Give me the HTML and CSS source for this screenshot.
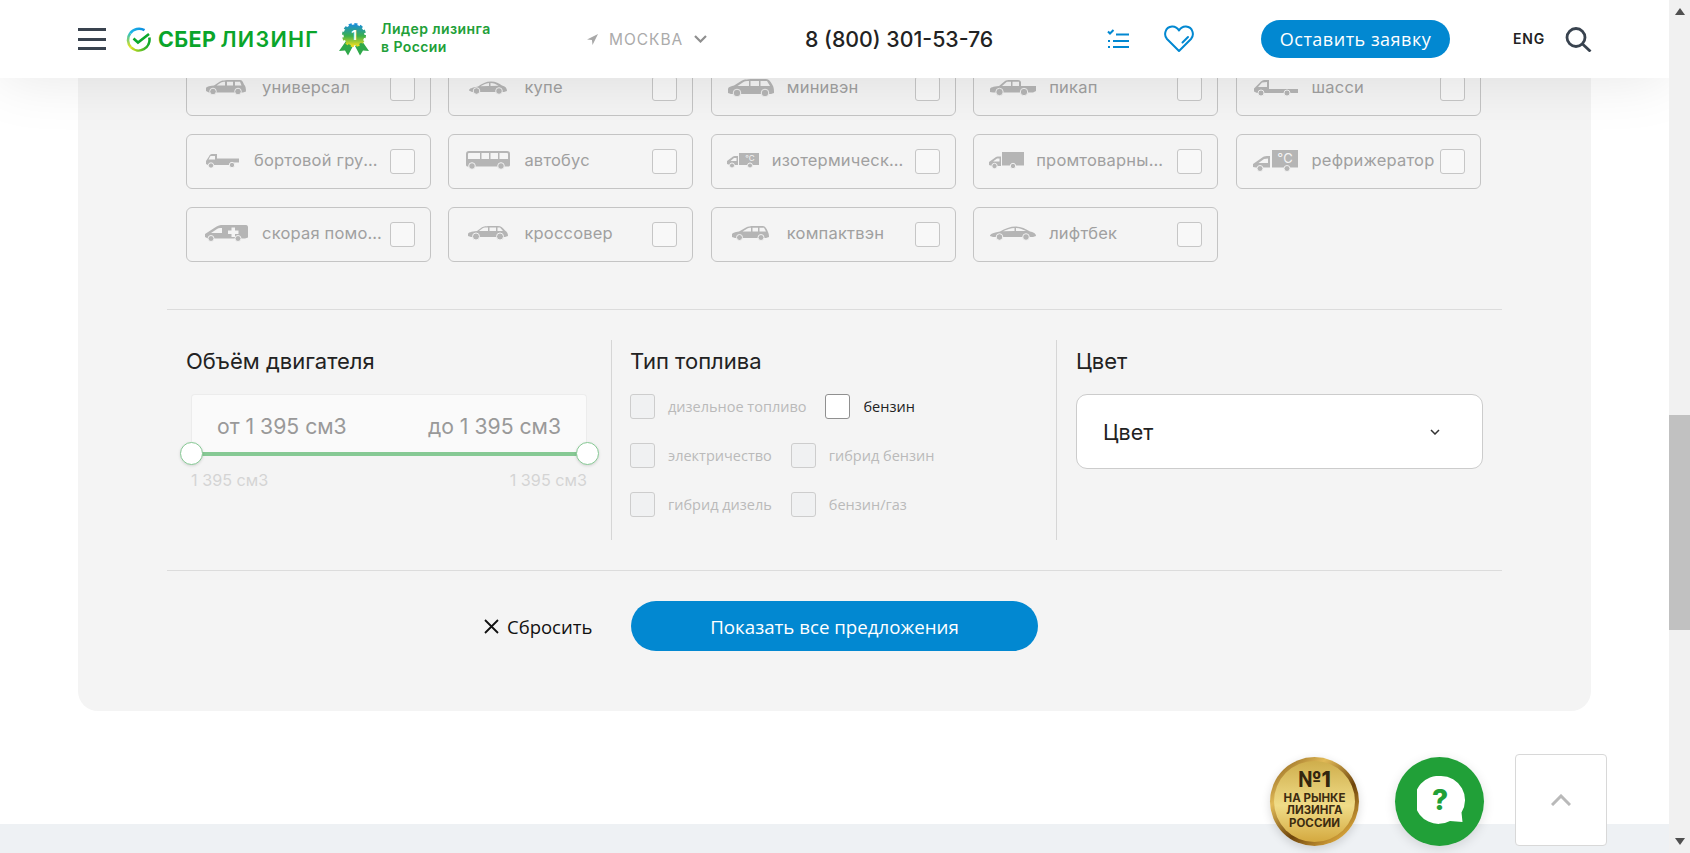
FILE: index.html
```html
<!DOCTYPE html>
<html lang="ru">
<head>
<meta charset="utf-8">
<title>Сбербанк Лизинг</title>
<link rel="stylesheet" href="styles.css">
</head>
<body>
<div class="app">
  <div class="page">
    <header class="header">
      <div class="brand">
        <div class="burger"><span></span><span></span><span></span></div>
        <svg class="logo-mark" width="25" height="25" viewBox="0 0 25 25">
          <defs>
            <linearGradient id="ringA" x1="0" y1="0" x2="1" y2="0"><stop offset="0" stop-color="#1fb8e8"/><stop offset="1" stop-color="#0a8be0"/></linearGradient>
            <linearGradient id="ringB" x1="0" y1="0" x2="0" y2="1"><stop offset="0" stop-color="#2ec0c0"/><stop offset="1" stop-color="#e6e31a"/></linearGradient>
            <linearGradient id="ringC" x1="0" y1="0" x2="1" y2="0"><stop offset="0" stop-color="#d8e020"/><stop offset="1" stop-color="#0aa82a"/></linearGradient>
          </defs>
          <path class="ring" stroke="url(#ringA)" d="M4.2 6.3A10.9 10.9 0 0 1 18.5 3.2"/>
          <path class="ring" stroke="url(#ringB)" d="M4.2 6.3A10.9 10.9 0 0 0 5 20.4"/>
          <path class="ring" stroke="url(#ringC)" d="M5 20.4A10.9 10.9 0 0 0 23.3 10.5"/>
          <path class="logo-check" d="M7.5 11.5L12 15.5L23 7"/>
        </svg>
        <div class="logo-text"><span class="logo-sber">СБЕР</span><span class="logo-lease">ЛИЗИНГ</span></div>
        <svg class="rosette" width="30" height="33" viewBox="0 0 30 33">
          <defs>
            <linearGradient id="rose" x1="0" y1="0" x2="0" y2="1"><stop offset="0" stop-color="#1a8fd8"/><stop offset=".55" stop-color="#3cb04a"/><stop offset="1" stop-color="#e8dc20"/></linearGradient>
          </defs>
          <path class="rib" d="M7 18L0 28L6 27.5L9 32.5L14 23Z"/>
          <path class="rib" d="M23 18L30 28L24 27.5L21 32.5L16 23Z"/>
          <circle cx="15" cy="12" r="10.5" fill="url(#rose)" stroke="url(#rose)" stroke-width="3" stroke-dasharray="3 2.5"/>
          <text class="rose-num" x="15" y="17">1</text>
        </svg>
        <div class="leader">Лидер лизинга<br>в России</div>
      </div>
      <div class="city">
        <svg width="11" height="11" viewBox="0 0 10 10"><path class="city-pin" d="M10 0L0 5L4.5 5.5L5 10Z"/></svg>
        <span class="city-name">МОСКВА</span>
        <svg width="13" height="8" viewBox="0 0 13 8"><path class="city-arrow" d="M1 1L6.5 6.5L12 1"/></svg>
      </div>
      <div class="phone">8 (800) 301-53-76</div>
      <svg width="22" height="20" viewBox="0 0 22 20"><path class="list-ico" d="M9 5.500H22M6 12H22M6 18H22M1 12H3M1 18H3"/><path class="list-tick" d="M1 2.500L3 4.500L6.500 1"/></svg>
      <svg width="30" height="28" viewBox="0 0 30 28"><path class="heart" d="M15 26L3 14C-.5 10 1 2 8 1.500C11 1.300 13.500 3 15 5.500C16.500 3 19 1.300 22 1.500C29 2 30.500 10 27 14Z"/><path class="heart" d="M18.500 17.500L24 12"/></svg>
      <a class="cta">Оставить заявку</a>
      <div class="lang">ENG</div>
      <svg width="27" height="25" viewBox="0 0 27 25"><circle class="search" cx="11" cy="10.500" r="9"/><path class="search" d="M17.500 17L25.500 24.500"/></svg>
    </header>

    <main class="panel">
      <div class="types">
        <div class="card"><div class="card-ico"><svg width="40" height="15" viewBox="0 0 40 15"><path class="veh" d="M0 11V8.500C0 7 2 6.200 8 5.500L14 1.500C16 .5 19 0 25 0H34C36 0 37 2 38 4.500C39.500 6 40 8 40 11.500L37 12.500H3ZM15 2.500L10.500 5.500H19V1.800C17 1.800 16 2 15 2.500ZM21 1.800V5.500H27V1.800ZM29 1.800V5.500H35.500L34 1.800Z"/><circle class="wh" cx="7" cy="11.500" r="3.300"/><circle class="wh" cx="32" cy="11.500" r="3.300"/></svg></div><span class="card-name">универсал</span><i class="box"></i></div>
        <div class="card"><div class="card-ico"><svg width="38" height="14" viewBox="0 0 38 14"><path class="veh" d="M0 9.500C0 7.500 3 6.500 9 5.500C13 2.500 17 .5 22 .5C27 .5 30 2.500 33 4.500C36 5 38 7 38 10L35 11H3ZM11.500 5.300C14 3.500 16.500 2.200 20 1.900V5ZM21.500 1.900C25 1.900 27 3 29.500 4.800L21.500 5Z"/><circle class="wh" cx="7.500" cy="10" r="3.300"/><circle class="wh" cx="30" cy="10" r="3.300"/></svg></div><span class="card-name">купе</span><i class="box"></i></div>
        <div class="card"><div class="card-ico"><svg width="46" height="18" viewBox="0 0 46 18"><path class="veh" d="M0 14V10C0 8 2 7.500 6 6.500L14 1.500C16 .5 20 0 28 0H38C41 0 43 3 45 7C46 9 46 12 46 14L43 15H3ZM15.500 3L9.500 7H21V2C18 2 16.500 2.400 15.500 3ZM22.500 2V7H31V2ZM32.500 2V7H42L39 2Z"/><circle class="wh" cx="9" cy="14" r="3.800"/><circle class="wh" cx="37" cy="14" r="3.800"/></svg></div><span class="card-name">минивэн</span><i class="box"></i></div>
        <div class="card"><div class="card-ico"><svg width="46" height="16" viewBox="0 0 46 16"><path class="veh" d="M0 12V9C0 7.500 3 6.500 9 6L15 1C16 .4 18 0 20 0H28C29.500 0 30.500 .8 31 2V6H46V11L43 12.500H3ZM16.500 2L12 6H21V1.800H18C17.400 1.800 17 1.900 16.500 2ZM22.500 1.800V6H29V1.800Z"/><circle class="wh" cx="9.500" cy="12" r="3.700"/><circle class="wh" cx="34" cy="12" r="3.700"/></svg></div><span class="card-name">пикап</span><i class="box"></i></div>
        <div class="card"><div class="card-ico"><svg width="44" height="16" viewBox="0 0 44 16"><path class="veh" d="M0 11.500V8.500L7 1.500C8 .5 9 0 10 0H15V9H44V13H3ZM8 2.500L4 7H13V2Z"/><circle class="wh" cx="7" cy="13" r="3"/><circle class="wh" cx="33" cy="13" r="3"/></svg></div><span class="card-name">шасси</span><i class="box"></i></div>

        <div class="card"><div class="card-ico card-ico-38"><svg width="33" height="14" viewBox="0 0 33 14"><path class="veh" d="M0 10V7L3 2.500C3.500 1 4.500 0 6 0H11V4.500H33V8.500H28V11H2ZM4.500 2L2.500 5.500H9V2Z"/><circle class="wh" cx="5" cy="11.500" r="2.700"/><circle class="wh" cx="26" cy="11" r="2.700"/></svg></div><span class="card-name card-name-128">бортовой грузовик</span><i class="box"></i></div>
        <div class="card"><div class="card-ico"><svg width="44" height="19" viewBox="0 0 44 19"><path class="veh" d="M3 0H41C43 0 44 1 44 3V14C44 15 43 15.500 42 15.500H2C1 15.500 0 15 0 14V3C0 1 1 0 3 0ZM3 2H14V8H2V3C2 2.500 2.500 2 3 2ZM15.500 2H23V8H15.500ZM24.500 2H32V8H24.500ZM33.500 2H41C41.500 2 42 2.500 42 3V8H33.500Z"/><circle class="wh" cx="6" cy="15" r="3.300"/><circle class="wh" cx="35" cy="15" r="3.300"/></svg></div><span class="card-name">автобус</span><i class="box"></i></div>
        <div class="card"><div class="card-ico card-ico-31"><svg width="32" height="16" viewBox="0 0 32 16"><path class="veh" d="M0 11V8L6 3.500C7 3 8 3 10 3H11V12H3ZM7 5L3.500 8H9.500V5Z"/><rect class="veh" x="12" y="0" width="20" height="12"/><text class="deg deg-s" x="23" y="8">°C</text><circle class="wh" cx="5" cy="12.500" r="2.500"/><circle class="wh" cx="23" cy="12.500" r="2.500"/></svg></div><span class="card-name card-name-133">изотермический</span><i class="box"></i></div>
        <div class="card"><div class="card-ico card-ico-33"><svg width="35" height="17" viewBox="0 0 35 17"><path class="veh" d="M0 13V10L7 5C8 4.500 9 4.500 11 4.500H12V14H3ZM8 6.500L4 9.500H10.500V6.500Z"/><rect class="veh" x="13" y="0" width="22" height="13.500"/><circle class="wh" cx="5.500" cy="14" r="2.700"/><circle class="wh" cx="24" cy="14" r="2.700"/></svg></div><span class="card-name card-name-130">промтоварный фургон</span><i class="box"></i></div>
        <div class="card"><div class="card-ico"><svg width="45" height="22" viewBox="0 0 45 22"><path class="veh" d="M0 17V14L10 7C11 6.400 13 6 16 6H17V17.500H3ZM11 9L5.500 13H15V8.500Z"/><rect class="veh" x="19" y="0" width="26" height="17.500"/><text class="deg deg-l" x="32" y="13">°C</text><circle class="wh" cx="7" cy="18.500" r="3"/><circle class="wh" cx="34" cy="18.500" r="3"/></svg></div><span class="card-name">рефрижератор</span><i class="box"></i></div>

        <div class="card"><div class="card-ico"><svg width="43" height="17" viewBox="0 0 43 17"><path class="veh" d="M0 12V9L10 2.500C13 .5 15 0 18 0H41C42.500 0 43 1 43 2.500V12.500L40 13.500H3ZM12 4L6 8H17V3H15C14 3 13 3.300 12 4Z"/><path class="cross" d="M26.500 2.500h3.500v3h3.500v3.500h-3.500v3h-3.500v-3h-3.500v-3.500h3.500z"/><circle class="wh" cx="6" cy="13.500" r="3"/><circle class="wh" cx="33" cy="13.500" r="3"/></svg></div><span class="card-name">скорая помощь</span><i class="box"></i></div>
        <div class="card"><div class="card-ico"><svg width="40" height="15" viewBox="0 0 40 15"><path class="veh" d="M0 10V8C0 6.500 3 5.500 9 5L14 1.200C15.500 .5 18 0 24 0H30C33 0 35 2 37 4.500C39 5.500 40 7.500 40 10L37 11H3ZM15 2L11 5H20V1.500C17.500 1.500 16 1.600 15 2ZM21.500 1.500V5H28V1.500ZM29.500 1.500V5H35L32 1.500Z"/><circle class="wh" cx="8" cy="10.500" r="3.500"/><circle class="wh" cx="32" cy="10.500" r="3.500"/></svg></div><span class="card-name">кроссовер</span><i class="box"></i></div>
        <div class="card"><div class="card-ico"><svg width="37" height="15" viewBox="0 0 37 15"><path class="veh" d="M0 11V8.500C0 7 3 6 7 5.500L14 1.500C16 .5 18 0 22 0H31C33 0 35 3 36 6C37 8 37 10 37 11L34 12H3ZM15 2.800L10.500 5.500H19V1.800C17 1.800 16 2 15 2.800ZM20.500 1.800V5.500H26V1.800ZM27.500 1.800V5.500H34L32 1.800Z"/><circle class="wh" cx="7.500" cy="11.500" r="3"/><circle class="wh" cx="29" cy="11.500" r="3"/></svg></div><span class="card-name">компактвэн</span><i class="box"></i></div>
        <div class="card"><div class="card-ico"><svg width="46" height="15" viewBox="0 0 46 15"><path class="veh" d="M0 10C0 8 3 7 10 5.500C15 2.500 20 .5 26 .5C31 .5 36 3 40 5.500C43 6 46 7.500 46 10L43 11H3ZM13 5.300C17 3 21 2 24.500 1.900V5ZM26 1.900C30 1.900 33 3.500 36 5L26 5Z"/><circle class="wh" cx="9.500" cy="11" r="3.300"/><circle class="wh" cx="36" cy="11" r="3.300"/></svg></div><span class="card-name">лифтбек</span><i class="box"></i></div>
      </div>

      <div class="filters">
        <section class="col">
          <h3 class="col-title">Объём двигателя</h3>
          <div class="range">
            <div class="range-box"><span>от 1 395 см3</span><span>до 1 395 см3</span></div>
            <div class="track"><i class="thumb thumb-l"></i><i class="thumb thumb-r"></i></div>
            <div class="range-limits"><span>1 395 см3</span><span>1 395 см3</span></div>
          </div>
        </section>
        <section class="col">
          <h3 class="col-title">Тип топлива</h3>
          <div class="fuels">
            <div class="fuel-row">
              <label class="fuel"><i class="box box-off"></i>дизельное топливо</label>
              <label class="fuel fuel-on"><i class="box box-on"></i>бензин</label>
            </div>
            <div class="fuel-row">
              <label class="fuel"><i class="box box-off"></i>электричество</label>
              <label class="fuel"><i class="box box-off"></i>гибрид бензин</label>
            </div>
            <div class="fuel-row">
              <label class="fuel"><i class="box box-off"></i>гибрид дизель</label>
              <label class="fuel"><i class="box box-off"></i>бензин/газ</label>
            </div>
          </div>
        </section>
        <section class="col">
          <h3 class="col-title">Цвет</h3>
          <div class="select">
            <span>Цвет</span>
            <svg width="10" height="6" viewBox="0 0 10 6"><path class="select-arrow" d="M1 1L5 5L9 1"/></svg>
          </div>
        </section>
      </div>

      <div class="actions">
        <a class="reset"><svg width="15" height="15" viewBox="0 0 15 15"><path class="reset-x" d="M1 1L14 14M14 1L1 14"/></svg>Сбросить</a>
        <a class="show">Показать все предложения</a>
      </div>
    </main>

    <footer class="footer"></footer>

    <div class="floats">
      <div class="gold"><div class="gold-inner"><b>№1</b><span>НА РЫНКЕ</span><span>ЛИЗИНГА</span><span>РОССИИ</span></div></div>
      <div class="chat">
        <svg width="50" height="50" viewBox="0 0 50 50"><path class="bubble" d="M24 0A24 24 0 0 1 44.500 36.500L45.500 46L33 45A24 24 0 1 1 24 0Z"/><text class="chat-q" x="23" y="34">?</text></svg>
      </div>
      <div class="up"><svg width="20" height="12" viewBox="0 0 20 12"><path class="up-arrow" d="M1 11L10 2L19 11"/></svg></div>
    </div>
  </div>
  <aside class="scrollbar">
    <i class="sb-up"></i>
    <div class="sb-thumb"></div>
    <i class="sb-down"></i>
  </aside>
</div>
</body>
</html>
```

FILE: styles.css
```css
* { box-sizing: border-box; }
html, body { margin: 0; height: 100%; overflow: hidden; background: #fff; }
body { font-family: "Inter", "Noto Sans", sans-serif; color: #222; }

.app { display: flex; height: 853px; }
.page { position: relative; width: 1669px; height: 853px; overflow: hidden; background: #fff; }

/* header */
.header {
  position: absolute; top: 0; left: 0; right: 0; z-index: 5; height: 78px;
  padding-left: 78px; background: #fff;
  box-shadow: 0 0 60px rgba(0, 0, 0, .1);
  display: grid; align-items: center;
  grid-template-columns: 511px 216px 302px 57px 97px 252px 52px 27px;
}
.brand { display: flex; align-items: center; }
.burger { width: 28px; height: 22px; display: flex; flex-direction: column; justify-content: space-between; margin-right: 20px; }
.burger span { display: block; height: 3px; background: #39434f; }
.logo-mark { flex: none; margin-right: 7px; }
.ring { fill: none; stroke-width: 2.6; }
.logo-check { fill: none; stroke: #0aa82a; stroke-width: 2.6; }
.logo-text { width: 166px; margin-right: 15px; font-size: 21.500px; font-weight: 700; color: #0aa52a; line-height: 25px; white-space: nowrap; }
.logo-sber { letter-spacing: .4px; margin-right: 4px; }
.logo-lease { font-weight: 600; letter-spacing: 1.300px; }
.rosette { flex: none; margin-right: 12px; }
.rib { fill: #2fa84a; }
.rose-num { font: 700 13px "Inter", sans-serif; fill: #fff; text-anchor: middle; }
.leader { font-size: 14px; font-weight: 600; line-height: 18px; margin-top: -2px; color: #21a038; letter-spacing: .42px; white-space: nowrap; }

.city { display: flex; align-items: center; margin-left: -2px; }
.city-pin { fill: #a8a8a8; }
.city-name { margin: 0 11px 0 11px; font-size: 15.500px; letter-spacing: .95px; color: #ababab; }
.city-arrow { fill: none; stroke: #8f8f8f; stroke-width: 2.2; }
.phone { font-size: 21.300px; font-weight: 500; color: #222; white-space: nowrap; }
.list-ico { fill: none; stroke: #0288d1; stroke-width: 2; }
.list-tick { fill: none; stroke: #0288d1; stroke-width: 2; }
.heart { fill: none; stroke: #0288d1; stroke-width: 2; stroke-linejoin: round; stroke-linecap: round; }
.cta {
  display: flex; align-items: center; justify-content: center; width: 189px; height: 38px;
  border-radius: 19px; background: #0288d1; color: #fff;
  font-family: "Open Sans", sans-serif; font-size: 18px; font-weight: 500; letter-spacing: .5px; white-space: nowrap;
}
.lang { font-size: 14px; font-weight: 600; color: #222; letter-spacing: .8px; margin-top: -2px; }
.search { fill: none; stroke: #39434f; stroke-width: 2.8; }

/* panel */
.panel {
  width: 1513px; margin: 0 auto; height: 711px; padding: 61px 89px 0;
  background: #f4f4f4; border-radius: 0 0 20px 20px;
}
.types {
  display: grid; grid-template-columns: repeat(5, 245px); column-gap: 17.400px; row-gap: 18px;
  grid-auto-rows: 55px; padding: 0 21px 47px 19px; border-bottom: 1px solid #dcdcdc;
}
.card { display: flex; align-items: center; padding: 0 15px 0 16px; border: 1px solid #c4c4c4; border-radius: 6px; }
.card-ico { flex: none; width: 46px; margin-right: 13px; display: flex; justify-content: center; margin-top: -2px; }
.card-ico-38 { width: 38px; }
.card-ico-31 { width: 31px; }
.card-ico-33 { width: 33px; }
.card-ico svg { flex: none; }
.veh { fill: #b5b5b5; fill-rule: evenodd; }
.wh { fill: #b5b5b5; stroke: #f2f2f2; stroke-width: 1; }
.cross { fill: #f4f4f4; }
.deg { fill: #f4f4f4; text-anchor: middle; font-family: "Inter", sans-serif; }
.deg-s { font-size: 8px; }
.deg-l { font-size: 13px; }
.card-name {
  flex: 1; min-width: 0; margin-right: 2px; padding-bottom: 3px;
  font-size: 16.500px; letter-spacing: .2px; color: #a0a0a0; white-space: nowrap; overflow: hidden; text-overflow: ellipsis;
}
.card-name-128, .card-name-130, .card-name-133 { flex: none; margin-right: auto; }
.card-name-128 { width: 128px; }
.card-name-130 { width: 130px; }
.card-name-133 { width: 133px; }
.box { flex: none; display: block; width: 25px; height: 25px; background: #f8f8f8; border: 1px solid #c6c6c6; border-radius: 3px; }

/* filters */
.filters { display: grid; grid-template-columns: 444px 445px 446px; margin-top: 30px; height: 231px; border-bottom: 1px solid #dcdcdc; }
.col { height: 200px; padding: 9px 0 0 19px; }
.col + .col { border-left: 1px solid #d6d6d6; padding-left: 18px; }
.col:last-child { padding-left: 19px; }
.col-title { margin: 0 0 21px; font-size: 22px; line-height: 24px; font-weight: 400; color: #222; }

.range { margin-left: 5px; width: 396px; }
.range-box {
  height: 58px; padding: 5px 25px 0 25px; display: flex; justify-content: space-between; align-items: center;
  background: #fafafa; border: 1px solid #ececec; border-bottom: 0; border-radius: 4px 4px 0 0;
  font-size: 21.200px; color: #999;
}
.track { position: relative; height: 4px; background: #86c994; }
.thumb {
  position: absolute; top: -10px; width: 23px; height: 23px; border-radius: 50%;
  background: #fff; border: 1px solid #86c994; box-shadow: 0 1px 3px rgba(0, 0, 0, .12);
}
.thumb-l { left: -11px; }
.thumb-r { right: -12px; }
.range-limits { margin-top: 14px; display: flex; justify-content: space-between; font-size: 16.200px; color: #d4d4d4; }

.fuels { display: flex; flex-direction: column; row-gap: 24px; }
.fuel-row { display: flex; column-gap: 19px; }
.fuel { display: flex; align-items: center; column-gap: 13px; font-family: "Open Sans", sans-serif; font-size: 14.500px; color: #bababa; white-space: nowrap; }
.fuel-on { color: #222; }
.box-off { background: #f0f1f2; border-color: #cdcdcd; }
.box-on { background: #fff; border-color: #909090; }

.select {
  width: 407px; height: 75px; padding: 0 42px 0 26px;
  display: flex; align-items: center; justify-content: space-between;
  background: #fff; border: 1px solid #ccc; border-radius: 11px; font-size: 21.500px; color: #222;
}
.select-arrow { fill: none; stroke: #333; stroke-width: 1.5; }

.actions { display: flex; align-items: center; margin-top: 30px; padding-left: 317px; }
.reset { width: 147px; display: flex; align-items: center; column-gap: 8px; font-family: "Open Sans", sans-serif; font-size: 18.500px; color: #111; }
.reset-x { fill: none; stroke: #111; stroke-width: 1.8; }
.show {
  width: 407px; height: 50px; border-radius: 25px; background: #0288d1; color: #fff;
  display: flex; align-items: center; justify-content: center;
  font-family: "Open Sans", sans-serif; font-size: 18.700px; font-weight: 500;
}

.footer { margin-top: 113px; height: 29px; background: #eef1f4; }

/* floats */
.floats { position: absolute; right: 62px; bottom: 7px; display: flex; align-items: center; }
.gold {
  width: 89px; height: 89px; border-radius: 50%; padding: 4px; margin-right: 36px;
  background: linear-gradient(140deg, #7a4e0e, #e2bb58 30%, #6e440b 60%, #d09e38 85%, #7a4e0e);
  box-shadow: 0 3px 10px rgba(0, 0, 0, .15);
}
.gold-inner {
  width: 100%; height: 100%; border-radius: 50%; padding-bottom: 5px;
  background: linear-gradient(180deg, #cfae4c, #f0dc88 55%, #d4a93f);
  display: flex; flex-direction: column; align-items: center; justify-content: center;
  font-size: 11.500px; line-height: 12.500px; font-weight: 700; color: #3d2c10; white-space: nowrap;
}
.gold-inner b { font-size: 21px; line-height: 24px; font-weight: 800; color: #33250e; }
.chat {
  width: 89px; height: 89px; border-radius: 50%; background: #21a038; margin-right: 31px;
  display: flex; align-items: center; justify-content: center; padding: 0 0 0 4px;
  box-shadow: 0 3px 12px rgba(0, 0, 0, .12);
}
.bubble { fill: #fff; }
.chat-q { font: 800 28px "Inter", sans-serif; fill: #21a038; text-anchor: middle; }
.up {
  width: 92px; height: 92px; background: #fff; border: 1px solid #d8d8d8; border-radius: 4px;
  display: flex; align-items: center; justify-content: center; margin-top: -2px;
}
.up-arrow { fill: none; stroke: #b9b9b9; stroke-width: 3; }

/* scrollbar */
.scrollbar { position: relative; width: 21px; height: 853px; background: #f1f1f1; display: flex; flex-direction: column; align-items: center; }
.sb-up { margin-top: 8px; border: 5px solid transparent; border-top: 0; border-bottom: 7px solid #505050; }
.sb-thumb { width: 100%; height: 215px; margin-top: 400px; background: #c1c1c1; }
.sb-down { margin-top: auto; margin-bottom: 8px; border: 5px solid transparent; border-bottom: 0; border-top: 7px solid #505050; }
```
